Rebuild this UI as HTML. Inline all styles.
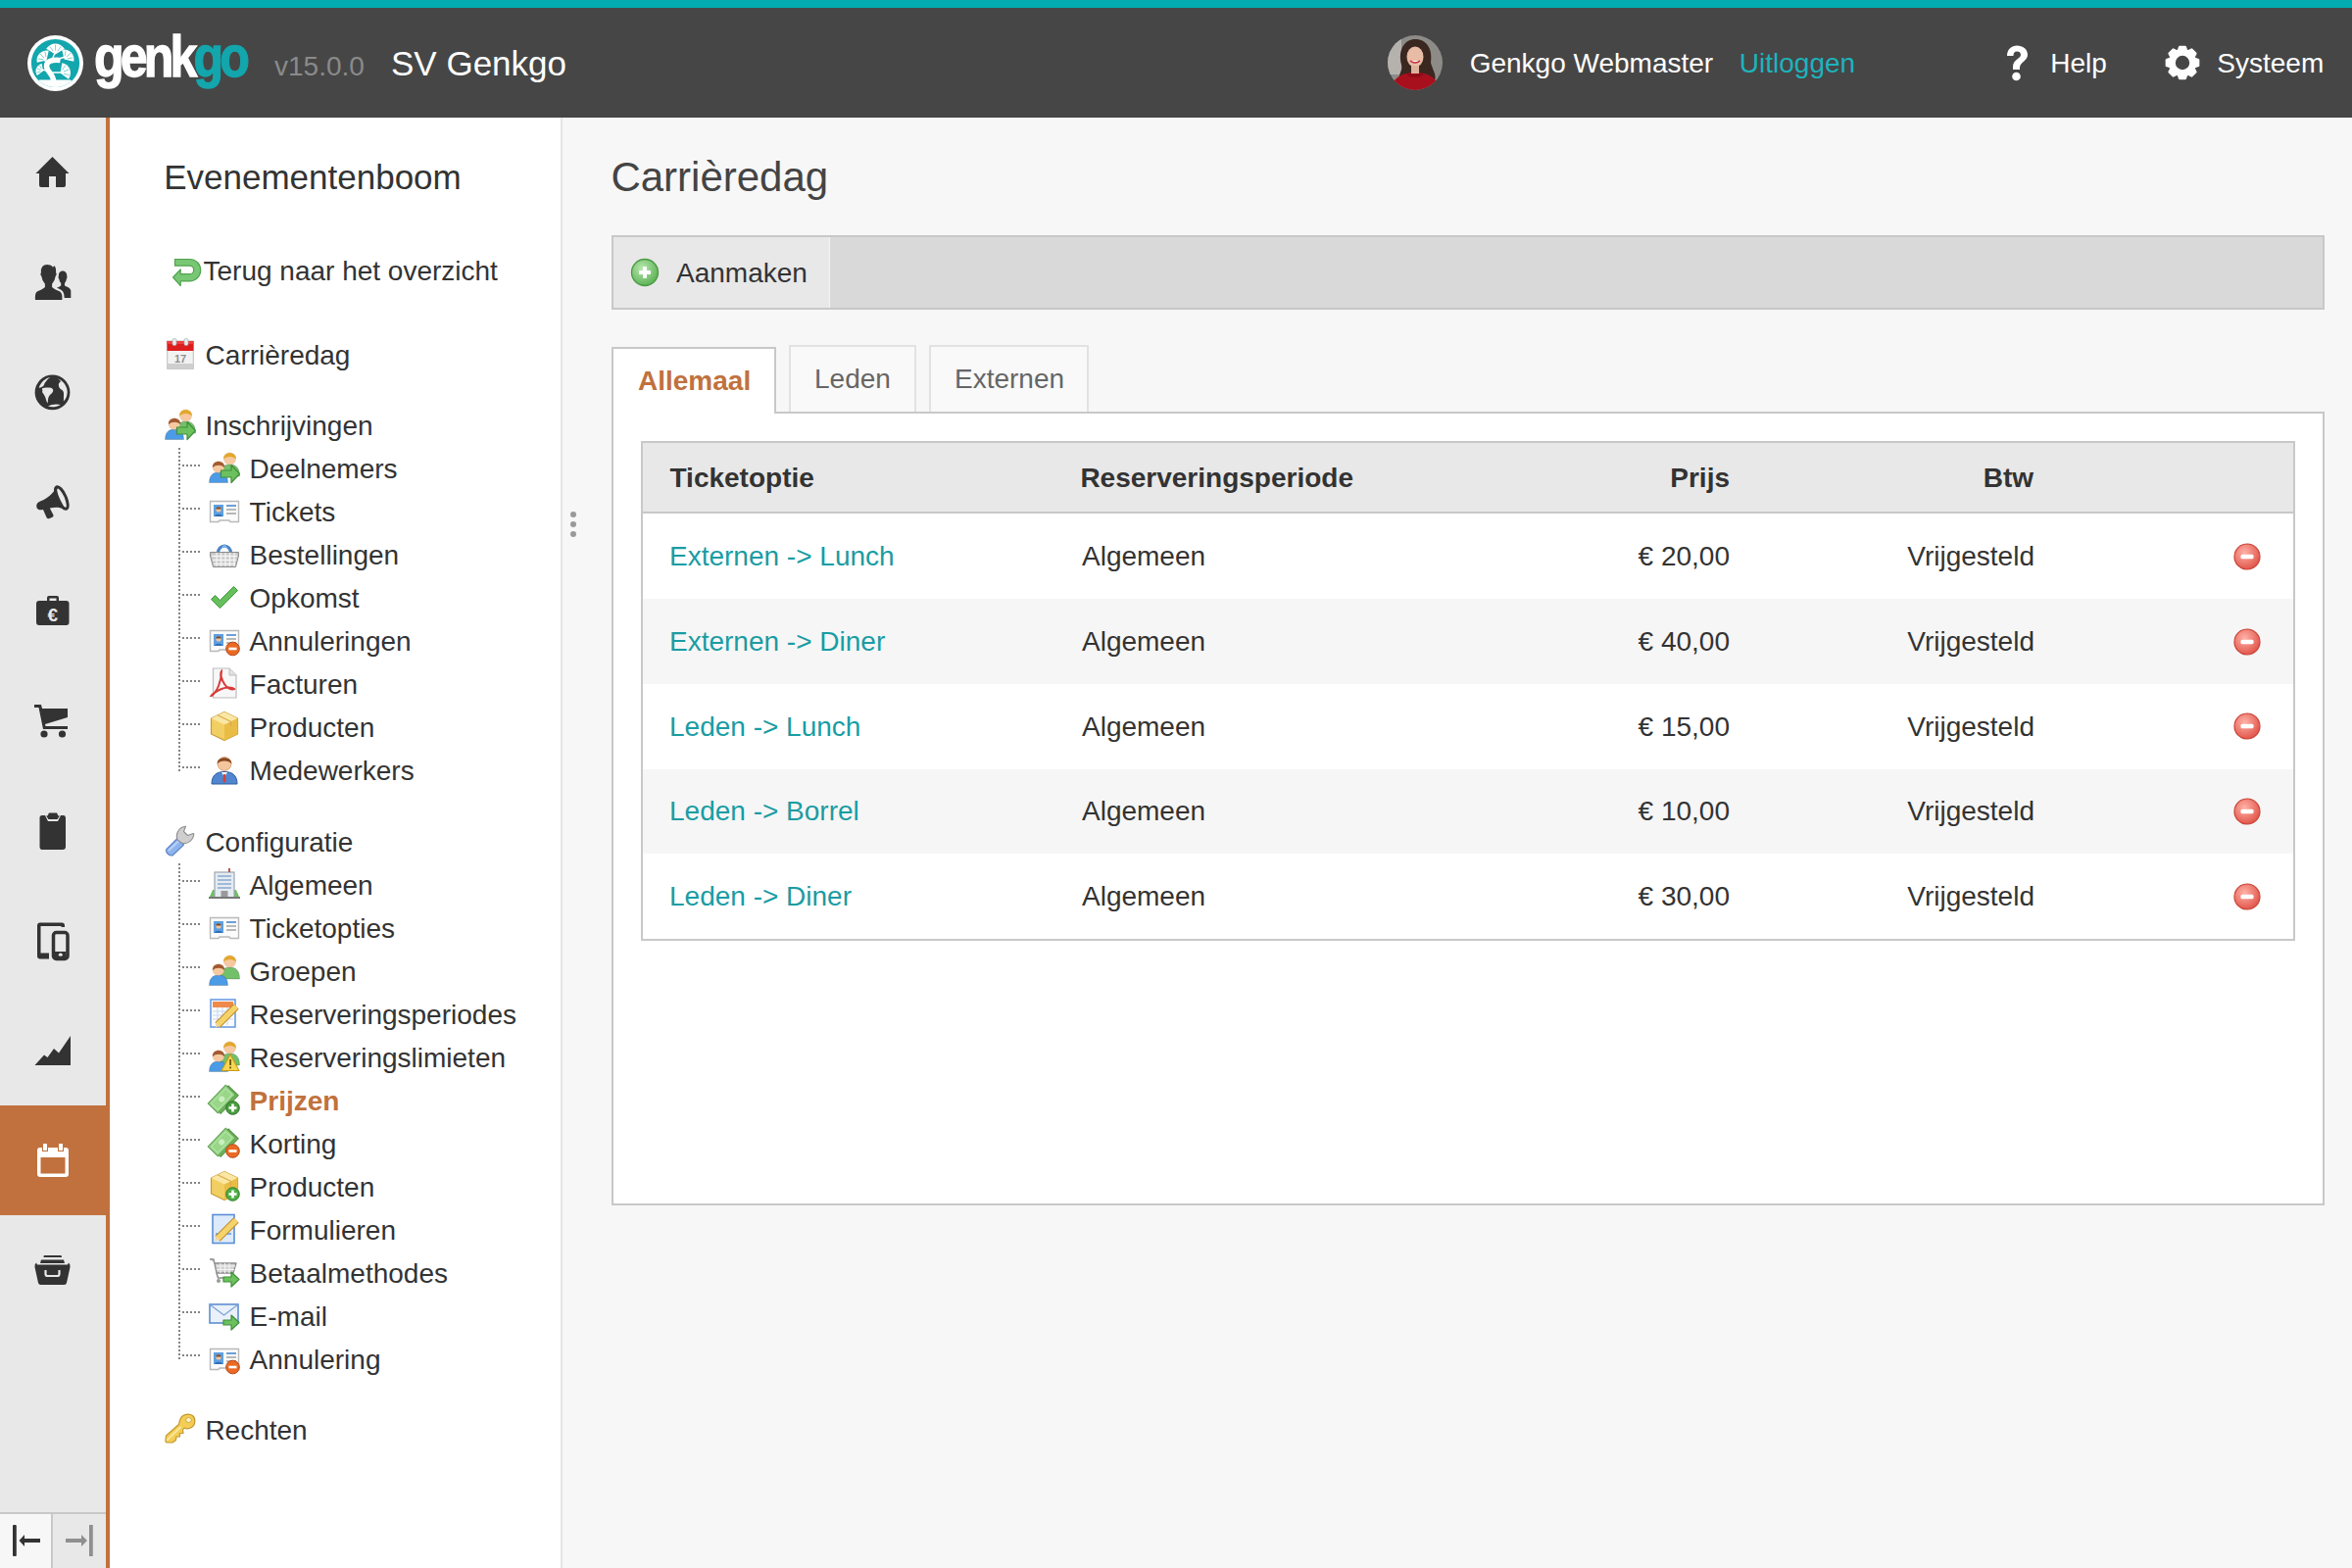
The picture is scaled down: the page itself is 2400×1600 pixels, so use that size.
<!DOCTYPE html>
<html><head><meta charset="utf-8">
<style>
html,body{margin:0;padding:0;}
body{width:2400px;height:1600px;overflow:hidden;position:relative;background:#f7f7f7;font-family:"Liberation Sans",sans-serif;color:#333;}
.a{position:absolute;}
.t{position:absolute;white-space:nowrap;line-height:1;}
.f28{font-size:28px;}
.r{text-align:right;}
svg{position:absolute;overflow:visible;}
</style></head><body>

<!-- top teal bar + header -->
<div class="a" style="left:0;top:0;width:2400px;height:8px;background:#03aab0"></div>
<div class="a" style="left:0;top:8px;width:2400px;height:112px;background:#464646"></div>
<svg style="left:28px;top:35.7px" width="57" height="57" viewBox="0 0 57 57"><defs><clipPath id="lgc"><circle cx="28.5" cy="28.5" r="24.6"/></clipPath></defs><circle cx="28.5" cy="28.5" r="28.5" fill="#fff"/><circle cx="28.5" cy="28.5" r="24.6" fill="#13a6ad"/><g clip-path="url(#lgc)"><path d="M12,45.5 L44,45.5 L46,48 L60,60 L-2,60 L10,48 Z" fill="#fff"/><path d="M26.5,47 C27,40 19.5,37 19.5,31.5 C19.5,26.5 25,24.5 33.5,25.5" stroke="#fff" stroke-width="5.5" fill="none"/><path d="M25,25 L28.5,17 M30,25 L38,22 M20,30 L17,24 M20,36 L14,35 M25,38 L35,38" stroke="#fff" stroke-width="1.4" fill="none"/><g transform="translate(28.5,19.5) rotate(0)"><path d="M0,0 L-9.33,-5.83 A11,11 0 0 1 9.33,-5.83 Z" fill="#fff"/><path d="M-2.20,-3.16 L-5.65,-8.13" stroke="#13a6ad" stroke-width="0.5"/><path d="M0.00,-3.85 L0.00,-9.90" stroke="#13a6ad" stroke-width="0.5"/><path d="M2.20,-3.16 L5.65,-8.13" stroke="#13a6ad" stroke-width="0.5"/></g><g transform="translate(19.5,25.5) rotate(-45)"><path d="M0,0 L-8.48,-5.30 A10,10 0 0 1 8.48,-5.30 Z" fill="#fff"/><path d="M-2.00,-2.87 L-5.14,-7.39" stroke="#13a6ad" stroke-width="0.5"/><path d="M0.00,-3.50 L0.00,-9.00" stroke="#13a6ad" stroke-width="0.5"/><path d="M2.00,-2.87 L5.14,-7.39" stroke="#13a6ad" stroke-width="0.5"/></g><g transform="translate(37.5,24.5) rotate(45)"><path d="M0,0 L-8.48,-5.30 A10,10 0 0 1 8.48,-5.30 Z" fill="#fff"/><path d="M-2.00,-2.87 L-5.14,-7.39" stroke="#13a6ad" stroke-width="0.5"/><path d="M0.00,-3.50 L0.00,-9.00" stroke="#13a6ad" stroke-width="0.5"/><path d="M2.00,-2.87 L5.14,-7.39" stroke="#13a6ad" stroke-width="0.5"/></g><g transform="translate(16,36.5) rotate(-68)"><path d="M0,0 L-6.36,-3.97 A7.5,7.5 0 0 1 6.36,-3.97 Z" fill="#fff"/><path d="M-1.50,-2.16 L-3.85,-5.54" stroke="#13a6ad" stroke-width="0.5"/><path d="M0.00,-2.62 L0.00,-6.75" stroke="#13a6ad" stroke-width="0.5"/><path d="M1.50,-2.16 L3.85,-5.54" stroke="#13a6ad" stroke-width="0.5"/></g><g transform="translate(33.5,38.5) rotate(68)"><path d="M0,0 L-8.90,-5.56 A10.5,10.5 0 0 1 8.90,-5.56 Z" fill="#fff"/><path d="M-2.10,-3.02 L-5.39,-7.76" stroke="#13a6ad" stroke-width="0.5"/><path d="M0.00,-3.67 L0.00,-9.45" stroke="#13a6ad" stroke-width="0.5"/><path d="M2.10,-3.02 L5.39,-7.76" stroke="#13a6ad" stroke-width="0.5"/></g></g></svg>
<svg style="left:1416px;top:36px" width="56" height="56" viewBox="0 0 56 56"><defs><clipPath id="avc"><circle cx="28" cy="28" r="28"/></clipPath></defs><g clip-path="url(#avc)"><rect width="56" height="56" fill="#8d8b88"/><rect x="0" y="0" width="14" height="40" fill="#b5b2ae"/><path d="M14,30 C10,14 18,4 28,4 C40,4 46,14 44,28 C46,36 50,40 48,46 L12,46 C10,40 16,36 14,30Z" fill="#3a2820"/><ellipse cx="28" cy="22" rx="8.5" ry="10.5" fill="#e8bca6"/><path d="M23,26 Q28,30 33,26" stroke="#c03040" stroke-width="1.6" fill="#fff"/><path d="M4,56 C4,44 14,38 28,38 C42,38 52,44 52,56Z" fill="#a8101e"/><rect x="24" y="31" width="8" height="8" fill="#deb19a"/><path d="M20,38 Q28,42 36,38 L36,41 Q28,45 20,41Z" fill="#8e0c18"/></g></svg>
<svg style="left:2045px;top:45.5px" width="25" height="37" viewBox="0 0 25 37"><path d="M3,11 C3,4 8,0.5 13,0.5 C19,0.5 24,4 24,10 C24,16 16,17.5 16,23 L16,25 L9,25 L9,22 C9,14.5 17,14 17,10 C17,7.5 15.5,6.5 13,6.5 C10.5,6.5 9.5,8 9.5,11 Z" fill="#fff"/><circle cx="12.5" cy="32" r="4.3" fill="#fff"/></svg>
<svg style="left:2210px;top:47px" width="34" height="34" viewBox="0 0 34 34"><path d="M29.53,12.86 L33.25,14.11 L33.25,19.89 L29.53,21.14 L28.79,22.94 L30.53,26.44 L26.44,30.53 L22.94,28.79 L21.14,29.53 L19.89,33.25 L14.11,33.25 L12.86,29.53 L11.06,28.79 L7.56,30.53 L3.47,26.44 L5.21,22.94 L4.47,21.14 L0.75,19.89 L0.75,14.11 L4.47,12.86 L5.21,11.06 L3.47,7.56 L7.56,3.47 L11.06,5.21 L12.86,4.47 L14.11,0.75 L19.89,0.75 L21.14,4.47 L22.94,5.21 L26.44,3.47 L30.53,7.56 L28.79,11.06 Z" fill="#fff" stroke="#fff" stroke-width="2.2" stroke-linejoin="round"/><circle cx="17" cy="17" r="7.2" fill="#464646"/></svg>
<div class="t" style="left:96px;top:29px;font-size:59px;font-weight:bold;color:#fff;letter-spacing:-4.6px;transform-origin:0 0;transform:scaleX(0.85);-webkit-text-stroke:1.3px #fff">genk<span style="color:#13a6ad;-webkit-text-stroke:1.3px #13a6ad">go</span></div>
<div class="t f28" style="left:280px;top:53.8px;color:#8a8a8a">v15.0.0</div>
<div class="t" style="left:399px;top:47.4px;font-size:35px;color:#fff">SV Genkgo</div>
<div class="t f28" style="left:1499.7px;top:51px;color:#fff">Genkgo Webmaster</div>
<div class="t f28" style="left:1774.8px;top:51px;color:#1db3bb">Uitloggen</div>
<div class="t f28" style="left:2092.3px;top:51px;color:#fff">Help</div>
<div class="t f28" style="left:2262.3px;top:51px;color:#fff">Systeem</div>

<!-- left nav -->
<div class="a" style="left:0;top:120px;width:108px;height:1480px;background:#e8e8e8"></div>
<div class="a" style="left:108px;top:120px;width:4px;height:1480px;background:#c1713d"></div>
<div class="a" style="left:0;top:1128px;width:112px;height:112px;background:#c1713d"></div>
<div class="a" style="left:0;top:1543px;width:108px;height:2px;background:#c8c8c8"></div>
<div class="a" style="left:0;top:1545px;width:52px;height:55px;background:#f7f7f7"></div>
<div class="a" style="left:52px;top:1545px;width:2px;height:55px;background:#c8c8c8"></div>
<div class="a" style="left:54px;top:1545px;width:54px;height:55px;background:#e8e8e8"></div>
<svg style="left:36px;top:159px" width="36" height="34" viewBox="0 0 36 34"><path d="M17.5,1 L34.5,18 L31,18 L31,30 Q31,32 29,32 L21,32 L21,21 L14,21 L14,32 L6,32 Q4,32 4,30 L4,18 L0.5,18 Z" fill="#333"/></svg>
<svg style="left:34px;top:268px" width="40" height="40" viewBox="0 0 40 40"><path d="M30,8.5 C27,8.5 25.5,11 25.7,14 C25.4,14.5 25.5,16 26.2,16.6 C26.5,18.5 27.2,20 28.2,21 L28.2,23.5 C27,24.5 25.5,25 24,25.8 L24,36 L38.3,36 L38.3,28.5 C38,26.5 36,25.2 33.5,24.2 L32,23.5 L32,21 C33,20 33.6,18.5 33.9,16.6 C34.5,16 34.6,14.5 34.3,14 C34.5,11 33,8.5 30,8.5Z" fill="#333"/><path d="M14,0.8 C9,0.8 6.3,4.5 6.8,10 C6,10.8 6.2,13.2 7.3,14.2 C7.8,17.5 9,20.3 10.8,22 L10.8,24.6 C9.5,26 7,27 4.5,28 C2,29 0.8,31.5 0.8,35 L0.8,39.2 L30.5,39.2 L30.5,35 C30.5,31.5 29,29 26.5,28 C24,27 21.5,26 20.2,24.6 L20.2,22 C22,20.3 23.2,17.5 23.7,14.2 C24.8,13.2 25,10.8 24.2,10 C24.5,6 23.5,3 21.5,1.5 L20,3 C19,1.5 16.5,0.8 14,0.8Z" fill="#333" stroke="#e8e8e8" stroke-width="2.2"/></svg>
<svg style="left:35px;top:381.5px" width="37" height="37" viewBox="0 0 37 37"><circle cx="18.5" cy="18.4" r="17.9" fill="#333"/><path d="M16.1,3.1 C11,4.3 6.8,8 4.7,13.7 C6.5,13.4 8.5,12.6 9.6,11.4 C10.6,8.4 13,5.4 16.1,3.1Z" fill="#e8e8e8"/><path d="M8,14.2 C10,13.4 14,13.3 17,13.8 C18.6,14.3 19.4,15.3 19.2,16.8 C19,18.5 17.5,19.8 16,21 C14.8,22.3 14.2,24 14,26 L13.6,29.6 C12.8,28.5 12.2,26.5 11.6,24.5 C11,22.5 10,21 9,19.6 C8.2,18.5 7.8,17.5 8.4,16.6 C8.2,15.8 7.8,15 8,14.2Z" fill="#e8e8e8"/><path d="M23.8,4.2 C25.5,5 26.5,6 26.9,7.6 C25.9,8.2 25,9 24.8,10.5 C24.8,12.5 25.8,14.5 27.5,15.5 C29.5,16.5 30.1,18 30,20 L29.9,27.6 C32.4,25 33.7,21.5 33.7,18 C33.7,12 29.6,6.5 23.8,4.2Z" fill="#e8e8e8"/><path d="M14,32.6 C17,33.9 23,33.6 26.9,31 C23,30 17,30.5 14,32.6Z" fill="#e8e8e8"/></svg>
<svg style="left:36px;top:494px" width="36" height="38" viewBox="0 0 36 38"><path d="M22,2 C19,9 13,14.5 5,17.5 C1.5,18.8 0.8,21.5 1.5,24 C2.5,26.5 5,26.5 8,26 L11.5,34 Q12.5,35.8 14.5,35 L17.5,33.8 Q19.2,33 18.2,31 L14.8,24.5 C20,23.5 24.5,23.5 30,25.5 Z" fill="#333"/><ellipse cx="26.8" cy="14" rx="4.3" ry="12.2" transform="rotate(-24 26.8 14)" fill="none" stroke="#333" stroke-width="3"/><ellipse cx="26.8" cy="14" rx="2.1" ry="10.2" transform="rotate(-24 26.8 14)" fill="#e8e8e8"/></svg>
<svg style="left:37px;top:607px" width="34" height="32" viewBox="0 0 34 32"><path d="M11,6 L11,3 Q11,1 13,1 L21,1 Q23,1 23,3 L23,6 L20.5,6 L20.5,3.5 L13.5,3.5 L13.5,6 Z" fill="#333"/><rect x="0" y="6" width="33.5" height="25" rx="3" fill="#333"/><text x="16.8" y="26.5" font-family="Liberation Sans" font-weight="bold" font-size="19" fill="#e8e8e8" text-anchor="middle">€</text></svg>
<svg style="left:34px;top:718px" width="36" height="37" viewBox="0 0 36 37"><path d="M1,1 L8,1 L9,5 L35,5 L35,14 L12,21 L12.5,23 L35,23 L35,26 L10,26 L5.5,4 L1,4 Z" fill="#333"/><circle cx="11" cy="31" r="3.6" fill="#333"/><circle cx="29.5" cy="31" r="3.6" fill="#333"/></svg>
<svg style="left:40px;top:828px" width="28" height="40" viewBox="0 0 28 40"><path d="M3,4 L6,4 L9,10 L19,10 L22,4 L25,4 Q27,4 27,6.5 L27,36 Q27,39 24,39 L3,39 Q0.5,39 0.5,36 L0.5,6.5 Q0.5,4 3,4Z" fill="#333"/><path d="M10,1.5 L18,1.5 L19.5,4.5 L21,4.5 L18.5,8 L9.5,8 L7,4.5 L8.5,4.5Z" fill="#333"/></svg>
<svg style="left:37px;top:940px" width="34" height="40" viewBox="0 0 34 40"><path d="M4,1.5 L26,1.5 Q29,1.5 29,4.5 L29,6 L25.5,6 L25.5,5 L4.5,5 L4.5,32.5 L13,32.5 L13,38.5 L4,38.5 Q1,38.5 1,35.5 L1,4.5 Q1,1.5 4,1.5Z" fill="#333"/><rect x="17.5" y="11.5" width="14.5" height="27" rx="3" fill="none" stroke="#333" stroke-width="3.5"/><rect x="19" y="31" width="11.5" height="6" fill="#333"/><ellipse cx="24.8" cy="34.2" rx="2" ry="1.6" fill="#e8e8e8"/></svg>
<svg style="left:35px;top:1056px" width="38" height="32" viewBox="0 0 38 32"><path d="M0.5,31 L10,20.5 L13.5,23 L20,14 L25,18.5 L37,1 L37,31 Z" fill="#333"/></svg>
<svg style="left:37px;top:1166px" width="34" height="36" viewBox="0 0 34 36"><path d="M3.5,5 L30,5 Q33,5 33,8 L33,32 Q33,35 30,35 L4,35 Q1,35 1,32 L1,8 Q1,5 3.5,5 Z M4.5,15 L4.5,31.5 L29.5,31.5 L29.5,15 Z" fill="#fff" fill-rule="evenodd"/><rect x="6.5" y="0.5" width="5" height="8" fill="#fff" stroke="#c1713d" stroke-width="1"/><rect x="22.5" y="0.5" width="5" height="8" fill="#fff" stroke="#c1713d" stroke-width="1"/></svg>
<svg style="left:35px;top:1280px" width="38" height="32" viewBox="0 0 38 32"><path d="M10,1 L27,1 Q28,1 28,2.5 L28,3 L9.5,3 L9.5,2.5 Q9.5,1 10,1Z" fill="#333"/><path d="M7,5.5 L30,5.5 L31,9 L6,9 Z" fill="#333"/><path d="M2,8.5 L3,10.5 L34,10.5 L35,8.5 Q37,10 36.5,13 L33,29 Q32.5,31 30.5,31 L6.5,31 Q4.5,31 4,29 L0.5,13 Q0,10 2,8.5Z" fill="#333"/><path d="M11.5,16 L11.5,20 Q11.5,22 13.5,22 L23.5,22 Q25.5,22 25.5,20 L25.5,16" fill="none" stroke="#e8e8e8" stroke-width="2.2"/></svg>
<svg style="left:0px;top:1550px" width="108" height="44" viewBox="0 0 108 44"><rect x="13" y="6" width="3.8" height="32" rx="1" fill="#333"/><path d="M19.5,22 L25,16 L25,20 L41,20 L41,24 L25,24 L25,28 Z" fill="#333"/><rect x="91" y="6" width="3.8" height="32" fill="#8f8f8f"/><path d="M89,22 L83,16 L83,20 L67,20 L67,24 L83,24 L83,28 Z" fill="#8f8f8f"/></svg>

<!-- tree panel -->
<div class="a" style="left:112px;top:120px;width:460px;height:1480px;background:#fff"></div>
<div class="a" style="left:572px;top:120px;width:2px;height:1480px;background:#e6e6e6"></div>
<div class="a" style="left:582px;top:522px;width:6px;height:6px;border-radius:3px;background:#999"></div>
<div class="a" style="left:582px;top:532px;width:6px;height:6px;border-radius:3px;background:#999"></div>
<div class="a" style="left:582px;top:542px;width:6px;height:6px;border-radius:3px;background:#999"></div>

<div class="t" style="left:167.2px;top:163.4px;font-size:35px;color:#333">Evenementenboom</div>
<div class="t f28" style="left:207.5px;top:263.3px">Terug naar het overzicht</div>
<div class="t f28" style="left:209.6px;top:349.3px">Carrièredag</div>
<div class="t f28" style="left:209.4px;top:421.3px">Inschrijvingen</div>
<div class="t f28" style="left:254.6px;top:465.3px">Deelnemers</div>
<div class="t f28" style="left:254.6px;top:509.3px">Tickets</div>
<div class="t f28" style="left:254.6px;top:553.3px">Bestellingen</div>
<div class="t f28" style="left:254.6px;top:597.3px">Opkomst</div>
<div class="t f28" style="left:254.6px;top:641.3px">Annuleringen</div>
<div class="t f28" style="left:254.6px;top:685.3px">Facturen</div>
<div class="t f28" style="left:254.6px;top:729.3px">Producten</div>
<div class="t f28" style="left:254.6px;top:773.3px">Medewerkers</div>
<div class="t f28" style="left:209.4px;top:845.8px">Configuratie</div>
<div class="t f28" style="left:254.6px;top:889.8px">Algemeen</div>
<div class="t f28" style="left:254.6px;top:933.8px">Ticketopties</div>
<div class="t f28" style="left:254.6px;top:977.8px">Groepen</div>
<div class="t f28" style="left:254.6px;top:1021.8px">Reserveringsperiodes</div>
<div class="t f28" style="left:254.6px;top:1065.8px">Reserveringslimieten</div>
<div class="t f28" style="left:254.6px;top:1109.8px;color:#c1713d;font-weight:bold">Prijzen</div>
<div class="t f28" style="left:254.6px;top:1153.8px">Korting</div>
<div class="t f28" style="left:254.6px;top:1197.8px">Producten</div>
<div class="t f28" style="left:254.6px;top:1241.8px">Formulieren</div>
<div class="t f28" style="left:254.6px;top:1285.8px">Betaalmethodes</div>
<div class="t f28" style="left:254.6px;top:1329.8px">E-mail</div>
<div class="t f28" style="left:254.6px;top:1373.8px">Annulering</div>
<div class="t f28" style="left:209.4px;top:1445.8px">Rechten</div>
<svg style="left:0;top:0" width="600" height="1600"><path d="M182,457h2v2h-2zM182,461h2v2h-2zM182,465h2v2h-2zM182,469h2v2h-2zM182,473h2v2h-2zM182,477h2v2h-2zM182,481h2v2h-2zM182,485h2v2h-2zM182,489h2v2h-2zM182,493h2v2h-2zM182,497h2v2h-2zM182,501h2v2h-2zM182,505h2v2h-2zM182,509h2v2h-2zM182,513h2v2h-2zM182,517h2v2h-2zM182,521h2v2h-2zM182,525h2v2h-2zM182,529h2v2h-2zM182,533h2v2h-2zM182,537h2v2h-2zM182,541h2v2h-2zM182,545h2v2h-2zM182,549h2v2h-2zM182,553h2v2h-2zM182,557h2v2h-2zM182,561h2v2h-2zM182,565h2v2h-2zM182,569h2v2h-2zM182,573h2v2h-2zM182,577h2v2h-2zM182,581h2v2h-2zM182,585h2v2h-2zM182,589h2v2h-2zM182,593h2v2h-2zM182,597h2v2h-2zM182,601h2v2h-2zM182,605h2v2h-2zM182,609h2v2h-2zM182,613h2v2h-2zM182,617h2v2h-2zM182,621h2v2h-2zM182,625h2v2h-2zM182,629h2v2h-2zM182,633h2v2h-2zM182,637h2v2h-2zM182,641h2v2h-2zM182,645h2v2h-2zM182,649h2v2h-2zM182,653h2v2h-2zM182,657h2v2h-2zM182,661h2v2h-2zM182,665h2v2h-2zM182,669h2v2h-2zM182,673h2v2h-2zM182,677h2v2h-2zM182,681h2v2h-2zM182,685h2v2h-2zM182,689h2v2h-2zM182,693h2v2h-2zM182,697h2v2h-2zM182,701h2v2h-2zM182,705h2v2h-2zM182,709h2v2h-2zM182,713h2v2h-2zM182,717h2v2h-2zM182,721h2v2h-2zM182,725h2v2h-2zM182,729h2v2h-2zM182,733h2v2h-2zM182,737h2v2h-2zM182,741h2v2h-2zM182,745h2v2h-2zM182,749h2v2h-2zM182,753h2v2h-2zM182,757h2v2h-2zM182,761h2v2h-2zM182,765h2v2h-2zM182,769h2v2h-2zM182,773h2v2h-2zM182,777h2v2h-2zM182,781h2v2h-2zM182,785h2v2h-2zM186,474h2v2h-2zM190,474h2v2h-2zM194,474h2v2h-2zM198,474h2v2h-2zM202,474h2v2h-2zM186,518h2v2h-2zM190,518h2v2h-2zM194,518h2v2h-2zM198,518h2v2h-2zM202,518h2v2h-2zM186,562h2v2h-2zM190,562h2v2h-2zM194,562h2v2h-2zM198,562h2v2h-2zM202,562h2v2h-2zM186,606h2v2h-2zM190,606h2v2h-2zM194,606h2v2h-2zM198,606h2v2h-2zM202,606h2v2h-2zM186,650h2v2h-2zM190,650h2v2h-2zM194,650h2v2h-2zM198,650h2v2h-2zM202,650h2v2h-2zM186,694h2v2h-2zM190,694h2v2h-2zM194,694h2v2h-2zM198,694h2v2h-2zM202,694h2v2h-2zM186,738h2v2h-2zM190,738h2v2h-2zM194,738h2v2h-2zM198,738h2v2h-2zM202,738h2v2h-2zM186,782h2v2h-2zM190,782h2v2h-2zM194,782h2v2h-2zM198,782h2v2h-2zM202,782h2v2h-2zM182,881h2v2h-2zM182,885h2v2h-2zM182,889h2v2h-2zM182,893h2v2h-2zM182,897h2v2h-2zM182,901h2v2h-2zM182,905h2v2h-2zM182,909h2v2h-2zM182,913h2v2h-2zM182,917h2v2h-2zM182,921h2v2h-2zM182,925h2v2h-2zM182,929h2v2h-2zM182,933h2v2h-2zM182,937h2v2h-2zM182,941h2v2h-2zM182,945h2v2h-2zM182,949h2v2h-2zM182,953h2v2h-2zM182,957h2v2h-2zM182,961h2v2h-2zM182,965h2v2h-2zM182,969h2v2h-2zM182,973h2v2h-2zM182,977h2v2h-2zM182,981h2v2h-2zM182,985h2v2h-2zM182,989h2v2h-2zM182,993h2v2h-2zM182,997h2v2h-2zM182,1001h2v2h-2zM182,1005h2v2h-2zM182,1009h2v2h-2zM182,1013h2v2h-2zM182,1017h2v2h-2zM182,1021h2v2h-2zM182,1025h2v2h-2zM182,1029h2v2h-2zM182,1033h2v2h-2zM182,1037h2v2h-2zM182,1041h2v2h-2zM182,1045h2v2h-2zM182,1049h2v2h-2zM182,1053h2v2h-2zM182,1057h2v2h-2zM182,1061h2v2h-2zM182,1065h2v2h-2zM182,1069h2v2h-2zM182,1073h2v2h-2zM182,1077h2v2h-2zM182,1081h2v2h-2zM182,1085h2v2h-2zM182,1089h2v2h-2zM182,1093h2v2h-2zM182,1097h2v2h-2zM182,1101h2v2h-2zM182,1105h2v2h-2zM182,1109h2v2h-2zM182,1113h2v2h-2zM182,1117h2v2h-2zM182,1121h2v2h-2zM182,1125h2v2h-2zM182,1129h2v2h-2zM182,1133h2v2h-2zM182,1137h2v2h-2zM182,1141h2v2h-2zM182,1145h2v2h-2zM182,1149h2v2h-2zM182,1153h2v2h-2zM182,1157h2v2h-2zM182,1161h2v2h-2zM182,1165h2v2h-2zM182,1169h2v2h-2zM182,1173h2v2h-2zM182,1177h2v2h-2zM182,1181h2v2h-2zM182,1185h2v2h-2zM182,1189h2v2h-2zM182,1193h2v2h-2zM182,1197h2v2h-2zM182,1201h2v2h-2zM182,1205h2v2h-2zM182,1209h2v2h-2zM182,1213h2v2h-2zM182,1217h2v2h-2zM182,1221h2v2h-2zM182,1225h2v2h-2zM182,1229h2v2h-2zM182,1233h2v2h-2zM182,1237h2v2h-2zM182,1241h2v2h-2zM182,1245h2v2h-2zM182,1249h2v2h-2zM182,1253h2v2h-2zM182,1257h2v2h-2zM182,1261h2v2h-2zM182,1265h2v2h-2zM182,1269h2v2h-2zM182,1273h2v2h-2zM182,1277h2v2h-2zM182,1281h2v2h-2zM182,1285h2v2h-2zM182,1289h2v2h-2zM182,1293h2v2h-2zM182,1297h2v2h-2zM182,1301h2v2h-2zM182,1305h2v2h-2zM182,1309h2v2h-2zM182,1313h2v2h-2zM182,1317h2v2h-2zM182,1321h2v2h-2zM182,1325h2v2h-2zM182,1329h2v2h-2zM182,1333h2v2h-2zM182,1337h2v2h-2zM182,1341h2v2h-2zM182,1345h2v2h-2zM182,1349h2v2h-2zM182,1353h2v2h-2zM182,1357h2v2h-2zM182,1361h2v2h-2zM182,1365h2v2h-2zM182,1369h2v2h-2zM182,1373h2v2h-2zM182,1377h2v2h-2zM182,1381h2v2h-2zM182,1385h2v2h-2zM186,898h2v2h-2zM190,898h2v2h-2zM194,898h2v2h-2zM198,898h2v2h-2zM202,898h2v2h-2zM186,942h2v2h-2zM190,942h2v2h-2zM194,942h2v2h-2zM198,942h2v2h-2zM202,942h2v2h-2zM186,986h2v2h-2zM190,986h2v2h-2zM194,986h2v2h-2zM198,986h2v2h-2zM202,986h2v2h-2zM186,1030h2v2h-2zM190,1030h2v2h-2zM194,1030h2v2h-2zM198,1030h2v2h-2zM202,1030h2v2h-2zM186,1074h2v2h-2zM190,1074h2v2h-2zM194,1074h2v2h-2zM198,1074h2v2h-2zM202,1074h2v2h-2zM186,1118h2v2h-2zM190,1118h2v2h-2zM194,1118h2v2h-2zM198,1118h2v2h-2zM202,1118h2v2h-2zM186,1162h2v2h-2zM190,1162h2v2h-2zM194,1162h2v2h-2zM198,1162h2v2h-2zM202,1162h2v2h-2zM186,1206h2v2h-2zM190,1206h2v2h-2zM194,1206h2v2h-2zM198,1206h2v2h-2zM202,1206h2v2h-2zM186,1250h2v2h-2zM190,1250h2v2h-2zM194,1250h2v2h-2zM198,1250h2v2h-2zM202,1250h2v2h-2zM186,1294h2v2h-2zM190,1294h2v2h-2zM194,1294h2v2h-2zM198,1294h2v2h-2zM202,1294h2v2h-2zM186,1338h2v2h-2zM190,1338h2v2h-2zM194,1338h2v2h-2zM198,1338h2v2h-2zM202,1338h2v2h-2zM186,1382h2v2h-2zM190,1382h2v2h-2zM194,1382h2v2h-2zM198,1382h2v2h-2zM202,1382h2v2h-2z" fill="#858585"/></svg>
<svg style="left:176px;top:263px" width="30" height="30" viewBox="0 0 30 30"><path d="M2.5,1.5 L17.5,1.5 A11.2,11.2 0 0 1 17.5,23.9 L8.2,23.9 L8.2,28.6 L0.6,20 L8.2,11.8 L8.2,16.6 L17.5,16.6 A4.2,4.2 0 0 0 17.5,8.2 L2.5,8.2 Z" fill="#78c774" stroke="#52a24e" stroke-width="1.2" stroke-linejoin="round"/></svg>
<svg style="left:170px;top:345px" width="28" height="32" viewBox="0 0 28 32"><rect x="0.7" y="3" width="26.6" height="28.3" fill="#f2f2f2" stroke="#bdbdbd" stroke-width="1"/><rect x="0.7" y="26" width="26.6" height="5.3" fill="#cfcfcf"/><rect x="0.5" y="3" width="27" height="10" fill="#dc1e1e"/><rect x="0.5" y="3" width="27" height="3" fill="#ee4040"/><rect x="6" y="0.5" width="4" height="7" rx="1.5" fill="#e9e9e9" stroke="#9aa" stroke-width="0.6"/><rect x="18" y="0.5" width="4" height="7" rx="1.5" fill="#e9e9e9" stroke="#9aa" stroke-width="0.6"/><text x="14" y="24.5" font-family="Liberation Sans" font-weight="bold" font-size="11" fill="#8f8f8f" text-anchor="middle">17</text></svg>
<svg style="left:168px;top:417px" width="32" height="32" viewBox="0 0 32 32"><path d="M11.5,25 C11.5,16 15.5,13 21.5,13 C27.5,13 31.5,16 31.5,25 Z" fill="#72c06a" stroke="rgba(0,0,0,.22)" stroke-width="0.8"/><circle cx="21.5" cy="7" r="6.2" fill="#f6c9a0" stroke="rgba(0,0,0,.12)" stroke-width="0.6"/><path d="M15.175999999999998,7.62 C14.68,-0.75 28.32,-0.75 27.824,7.62 C24.6,4.21 18.4,4.21 15.175999999999998,7.62Z" fill="#e3a72c"/><path d="M0.5,31.5 C0.5,24 4.3,21 10,21 C15.7,21 19.5,24 19.5,31.5 Z" fill="#4b9be6" stroke="rgba(0,0,0,.22)" stroke-width="0.8"/><circle cx="10" cy="15.5" r="6" fill="#f6c9a0" stroke="rgba(0,0,0,.12)" stroke-width="0.6"/><path d="M3.88,16.1 C3.3999999999999995,8.0 16.6,8.0 16.12,16.1 C13.0,12.8 7.0,12.8 3.88,16.1Z" fill="#a15a32"/><path transform="translate(12,13)" d="M0.5,6 L11,6 L11,0.5 L19.5,9.5 L11,18.5 L11,13 L0.5,13 Z" fill="#6cc15e" stroke="#3f8f3a" stroke-width="1.2" stroke-linejoin="round"/></svg>
<svg style="left:213px;top:461px" width="32" height="32" viewBox="0 0 32 32"><path d="M11.5,25 C11.5,16 15.5,13 21.5,13 C27.5,13 31.5,16 31.5,25 Z" fill="#72c06a" stroke="rgba(0,0,0,.22)" stroke-width="0.8"/><circle cx="21.5" cy="7" r="6.2" fill="#f6c9a0" stroke="rgba(0,0,0,.12)" stroke-width="0.6"/><path d="M15.175999999999998,7.62 C14.68,-0.75 28.32,-0.75 27.824,7.62 C24.6,4.21 18.4,4.21 15.175999999999998,7.62Z" fill="#e3a72c"/><path d="M0.5,31.5 C0.5,24 4.3,21 10,21 C15.7,21 19.5,24 19.5,31.5 Z" fill="#4b9be6" stroke="rgba(0,0,0,.22)" stroke-width="0.8"/><circle cx="10" cy="15.5" r="6" fill="#f6c9a0" stroke="rgba(0,0,0,.12)" stroke-width="0.6"/><path d="M3.88,16.1 C3.3999999999999995,8.0 16.6,8.0 16.12,16.1 C13.0,12.8 7.0,12.8 3.88,16.1Z" fill="#a15a32"/><path transform="translate(12,13)" d="M0.5,6 L11,6 L11,0.5 L19.5,9.5 L11,18.5 L11,13 L0.5,13 Z" fill="#6cc15e" stroke="#3f8f3a" stroke-width="1.2" stroke-linejoin="round"/></svg>
<svg style="left:213px;top:505px" width="32" height="32" viewBox="0 0 32 32"><path d="M1.5,6.5 L30.5,6.5 L30.5,27.5 L22,27.5 L21,26 L11,26 L10,27.5 L1.5,27.5 Z" fill="#fbfbfb" stroke="#b9b9b9" stroke-width="1.4"/><rect x="5" y="10" width="10" height="12" fill="#5d9fe0"/><circle cx="10" cy="15" r="2.6" fill="#f2c39a"/><path d="M7.3,14.5 C7.3,11.5 12.7,11.5 12.7,14.5 Z" fill="#7b4a2a"/><path d="M6,22 C6,19 14,19 14,22 Z" fill="#2f6fb8"/><rect x="18" y="10" width="10" height="2" fill="#6e9fd6"/><rect x="18" y="14" width="10" height="2" fill="#b8b8b8"/><rect x="18" y="18" width="10" height="2" fill="#b8b8b8"/></svg>
<svg style="left:213px;top:549px" width="32" height="32" viewBox="0 0 32 32"><path d="M9.5,15 A6.5,7 0 0 1 22.5,15" fill="none" stroke="#4f86c6" stroke-width="3.2"/><path d="M13,10 L19,10 L16,6 Z" fill="#7fb0e6"/><path d="M1.5,14.5 L30.5,14.5 L30.5,18 L27.5,29.5 L4.5,29.5 L1.5,18 Z" fill="#c9c9c9" stroke="#8a8a8a" stroke-width="1"/><path d="M3,18.5 H29 M4,22.5 H28 M5,26.5 H27 M8,15 V29 M12.5,15 V29 M17,15 V29 M21.5,15 V29 M26,15 V29" stroke="#f5f5f5" stroke-width="1.3"/></svg>
<svg style="left:213px;top:593px" width="32" height="32" viewBox="0 0 32 32"><path d="M2.5,18.5 L6.5,14.5 L11.5,19.5 L25.5,5.5 L29.5,9.5 L11.5,27.5 Z" fill="#66bf5c" stroke="#3e9a3a" stroke-width="1" stroke-linejoin="round"/></svg>
<svg style="left:213px;top:637px" width="32" height="32" viewBox="0 0 32 32"><path d="M1.5,6.5 L30.5,6.5 L30.5,27.5 L22,27.5 L21,26 L11,26 L10,27.5 L1.5,27.5 Z" fill="#fbfbfb" stroke="#b9b9b9" stroke-width="1.4"/><rect x="5" y="10" width="10" height="12" fill="#5d9fe0"/><circle cx="10" cy="15" r="2.6" fill="#f2c39a"/><path d="M7.3,14.5 C7.3,11.5 12.7,11.5 12.7,14.5 Z" fill="#7b4a2a"/><path d="M6,22 C6,19 14,19 14,22 Z" fill="#2f6fb8"/><rect x="18" y="10" width="10" height="2" fill="#6e9fd6"/><rect x="18" y="14" width="10" height="2" fill="#b8b8b8"/><rect x="18" y="18" width="10" height="2" fill="#b8b8b8"/><circle cx="24.5" cy="25" r="6.8" fill="#ea6a23" stroke="#b9461a" stroke-width="1"/><rect x="20.5" y="23.7" width="8" height="2.6" fill="#fff"/></svg>
<svg style="left:213px;top:681px" width="32" height="32" viewBox="0 0 32 32"><path d="M4.5,1 L21,1 L28,8 L28,31 L4.5,31 Z" fill="#f7f7f7" stroke="#bdbdbd" stroke-width="1.2"/><path d="M21,1 L21,8 L28,8" fill="#e2e2e2" stroke="#bdbdbd" stroke-width="1"/><path d="M13,4 C11,6 13,12 16,17 C19,22 24,23 26,22 C24,20 18,20 13,22 C8,24 3,28 2.5,29 C4,29 8,24 10,19 C12,14 13,8 13,4 Z" fill="none" stroke="#d83a3a" stroke-width="2"/></svg>
<svg style="left:213px;top:725px" width="32" height="32" viewBox="0 0 32 32"><path d="M16,1.5 L29.5,8 L29.5,24 L16,30.5 L2.5,24 L2.5,8 Z" fill="#f2cf63" stroke="#c89b35" stroke-width="1.2" stroke-linejoin="round"/><path d="M2.5,8 L16,14.5 L29.5,8 L16,1.5 Z" fill="#fbe7a4"/><path d="M16,14.5 L16,30.5 L29.5,24 L29.5,8 Z" fill="#e9bd45"/><path d="M9,4.8 L22.5,11.3 L22.5,16" stroke="#d6a84a" stroke-width="1.2" fill="none"/></svg>
<svg style="left:213px;top:769px" width="32" height="32" viewBox="0 0 32 32"><path d="M3,31 C3,22 8,18.5 16,18.5 C24,18.5 29,22 29,31 Z" fill="#4f86cf" stroke="#2f5f9f" stroke-width="1"/><path d="M13,19 L16,24 L19,19 Z" fill="#fff"/><path d="M15,21 L17,21 L17.5,28 L16,30 L14.5,28 Z" fill="#d0443c"/><circle cx="16" cy="10.5" r="7" fill="#f4c69c" stroke="#c08a60" stroke-width="0.6"/><path d="M8.7,10.5 C8,2 24,2 23.3,10.5 C21,6.5 11,6.5 8.7,10.5Z" fill="#8a4a22"/></svg>
<svg style="left:168px;top:841px" width="32" height="32" viewBox="0 0 32 32"><path d="M1.5,26 L13,14.5 L19.5,21 L8,32 C5,32.5 1,29.5 1.5,26 Z" fill="#8db3ee" stroke="#5d85c8" stroke-width="1.1" stroke-linejoin="round"/><path d="M4,27 L14.5,17" stroke="#b8d0f6" stroke-width="2"/><path d="M13,16 C11,11 13.5,4 20,2.5 L21.5,2.2 L19.5,7.5 L23.5,11.5 L29,9.5 L29.8,9.8 C29.5,16 24,20.5 18,19.5 Z" fill="#cfcfcf" stroke="#8f8f8f" stroke-width="1.1" stroke-linejoin="round"/></svg>
<svg style="left:213px;top:885.5px" width="32" height="32" viewBox="0 0 32 32"><path d="M0.5,30 L4,22 L9,22 L9,30 Z M31.5,30 L28,22 L23,22 L23,30 Z" fill="#6cc160"/><rect x="6" y="4" width="20" height="26" fill="#e4ebf2" stroke="#9da6ae" stroke-width="1.2"/><rect x="9" y="7" width="14" height="2" fill="#9fb9d6"/><rect x="9" y="11" width="14" height="2" fill="#9fb9d6"/><rect x="9" y="15" width="14" height="2" fill="#9fb9d6"/><rect x="9" y="19" width="14" height="2" fill="#9fb9d6"/><rect x="12.5" y="23" width="7" height="7" fill="#9a9a9a"/><rect x="20" y="0" width="2" height="4" fill="#b55"/><rect x="0" y="29" width="32" height="2" fill="#777"/></svg>
<svg style="left:213px;top:929.5px" width="32" height="32" viewBox="0 0 32 32"><path d="M1.5,6.5 L30.5,6.5 L30.5,27.5 L22,27.5 L21,26 L11,26 L10,27.5 L1.5,27.5 Z" fill="#fbfbfb" stroke="#b9b9b9" stroke-width="1.4"/><rect x="5" y="10" width="10" height="12" fill="#5d9fe0"/><circle cx="10" cy="15" r="2.6" fill="#f2c39a"/><path d="M7.3,14.5 C7.3,11.5 12.7,11.5 12.7,14.5 Z" fill="#7b4a2a"/><path d="M6,22 C6,19 14,19 14,22 Z" fill="#2f6fb8"/><rect x="18" y="10" width="10" height="2" fill="#6e9fd6"/><rect x="18" y="14" width="10" height="2" fill="#b8b8b8"/><rect x="18" y="18" width="10" height="2" fill="#b8b8b8"/></svg>
<svg style="left:213px;top:973.5px" width="32" height="32" viewBox="0 0 32 32"><path d="M11.5,25 C11.5,16 15.5,13 21.5,13 C27.5,13 31.5,16 31.5,25 Z" fill="#72c06a" stroke="rgba(0,0,0,.22)" stroke-width="0.8"/><circle cx="21.5" cy="7" r="6.2" fill="#f6c9a0" stroke="rgba(0,0,0,.12)" stroke-width="0.6"/><path d="M15.175999999999998,7.62 C14.68,-0.75 28.32,-0.75 27.824,7.62 C24.6,4.21 18.4,4.21 15.175999999999998,7.62Z" fill="#e3a72c"/><path d="M0.5,31.5 C0.5,24 4.3,21 10,21 C15.7,21 19.5,24 19.5,31.5 Z" fill="#4b9be6" stroke="rgba(0,0,0,.22)" stroke-width="0.8"/><circle cx="10" cy="15.5" r="6" fill="#f6c9a0" stroke="rgba(0,0,0,.12)" stroke-width="0.6"/><path d="M3.88,16.1 C3.3999999999999995,8.0 16.6,8.0 16.12,16.1 C13.0,12.8 7.0,12.8 3.88,16.1Z" fill="#a15a32"/></svg>
<svg style="left:213px;top:1017.5px" width="32" height="32" viewBox="0 0 32 32"><rect x="2" y="2" width="25" height="28" fill="#fafcff" stroke="#6d9de0" stroke-width="1.6"/><rect x="4" y="4" width="21" height="6" fill="#f08a4b"/><path d="M4,14 H25 M4,18 H25 M4,22 H25 M9,10 V28 M14,10 V28 M19,10 V28" stroke="#c7d7ee" stroke-width="1"/><line x1="9" y1="28" x2="28" y2="9" stroke="#c58a2a" stroke-width="7.5" stroke-linecap="butt"/><line x1="9" y1="28" x2="28" y2="9" stroke="#f4d46a" stroke-width="5.5" stroke-linecap="butt"/><path d="M6.5,30.5 L8,25 L11.5,28.5 Z" fill="#f0d5a0"/></svg>
<svg style="left:213px;top:1061.5px" width="32" height="32" viewBox="0 0 32 32"><path d="M11.5,25 C11.5,16 15.5,13 21.5,13 C27.5,13 31.5,16 31.5,25 Z" fill="#72c06a" stroke="rgba(0,0,0,.22)" stroke-width="0.8"/><circle cx="21.5" cy="7" r="6.2" fill="#f6c9a0" stroke="rgba(0,0,0,.12)" stroke-width="0.6"/><path d="M15.175999999999998,7.62 C14.68,-0.75 28.32,-0.75 27.824,7.62 C24.6,4.21 18.4,4.21 15.175999999999998,7.62Z" fill="#e3a72c"/><path d="M0.5,31.5 C0.5,24 4.3,21 10,21 C15.7,21 19.5,24 19.5,31.5 Z" fill="#4b9be6" stroke="rgba(0,0,0,.22)" stroke-width="0.8"/><circle cx="10" cy="15.5" r="6" fill="#f6c9a0" stroke="rgba(0,0,0,.12)" stroke-width="0.6"/><path d="M3.88,16.1 C3.3999999999999995,8.0 16.6,8.0 16.12,16.1 C13.0,12.8 7.0,12.8 3.88,16.1Z" fill="#a15a32"/><path d="M22,14 L31,30.5 L13,30.5 Z" fill="#f7d651" stroke="#c79a1d" stroke-width="1.1" stroke-linejoin="round"/><rect x="21.2" y="19" width="1.8" height="6" fill="#6b5210"/><rect x="21.2" y="26.5" width="1.8" height="1.8" fill="#6b5210"/></svg>
<svg style="left:213px;top:1105.5px" width="32" height="32" viewBox="0 0 32 32"><g transform="translate(14,15.5) rotate(-46)"><rect x="-12" y="-5" width="26" height="14" fill="#6fb85f" stroke="#4f8f41" stroke-width="1"/><rect x="-13.5" y="-7.5" width="26" height="14" fill="#98d688" stroke="#5f9f50" stroke-width="1"/><rect x="-11" y="-5" width="21" height="9" fill="none" stroke="#c4ebb8" stroke-width="0.8"/><circle cx="-0.5" cy="-0.5" r="3" fill="#c9efbf"/></g><circle cx="24.5" cy="24.5" r="6.8" fill="#4a9e40" stroke="#2f6f28" stroke-width="1"/><rect x="20.5" y="23.2" width="8" height="2.6" fill="#fff"/><rect x="23.2" y="20.5" width="2.6" height="8" fill="#fff"/></svg>
<svg style="left:213px;top:1149.5px" width="32" height="32" viewBox="0 0 32 32"><g transform="translate(14,15.5) rotate(-46)"><rect x="-12" y="-5" width="26" height="14" fill="#6fb85f" stroke="#4f8f41" stroke-width="1"/><rect x="-13.5" y="-7.5" width="26" height="14" fill="#98d688" stroke="#5f9f50" stroke-width="1"/><rect x="-11" y="-5" width="21" height="9" fill="none" stroke="#c4ebb8" stroke-width="0.8"/><circle cx="-0.5" cy="-0.5" r="3" fill="#c9efbf"/></g><circle cx="24.5" cy="24.5" r="6.8" fill="#ea6a23" stroke="#b9461a" stroke-width="1"/><rect x="20.5" y="23.2" width="8" height="2.6" fill="#fff"/></svg>
<svg style="left:213px;top:1193.5px" width="32" height="32" viewBox="0 0 32 32"><path d="M16,1.5 L29.5,8 L29.5,24 L16,30.5 L2.5,24 L2.5,8 Z" fill="#f2cf63" stroke="#c89b35" stroke-width="1.2" stroke-linejoin="round"/><path d="M2.5,8 L16,14.5 L29.5,8 L16,1.5 Z" fill="#fbe7a4"/><path d="M16,14.5 L16,30.5 L29.5,24 L29.5,8 Z" fill="#e9bd45"/><path d="M9,4.8 L22.5,11.3 L22.5,16" stroke="#d6a84a" stroke-width="1.2" fill="none"/><circle cx="24.5" cy="24.5" r="6.8" fill="#4fae46" stroke="#2f7f2a" stroke-width="1"/><rect x="20.5" y="23.2" width="8" height="2.6" fill="#fff"/><rect x="23.2" y="20.5" width="2.6" height="8" fill="#fff"/></svg>
<svg style="left:213px;top:1237.5px" width="32" height="32" viewBox="0 0 32 32"><rect x="4" y="1.5" width="22" height="29" fill="#dceafb" stroke="#5b8fd8" stroke-width="1.6"/><rect x="7" y="20" width="16" height="2" fill="#7faee8"/><line x1="9" y1="26" x2="28" y2="7" stroke="#c58a2a" stroke-width="7.5" stroke-linecap="butt"/><line x1="9" y1="26" x2="28" y2="7" stroke="#f4d46a" stroke-width="5.5" stroke-linecap="butt"/><path d="M6,28.5 L7.5,23 L11,26.5 Z" fill="#f0d5a0"/></svg>
<svg style="left:213px;top:1281.5px" width="32" height="32" viewBox="0 0 32 32"><path d="M1,3 L5,3 L8,17 L25,17 L28,7 L6,7" fill="#d2d2d2" stroke="#8c8c8c" stroke-width="1.3" stroke-linejoin="round"/><path d="M8,10 H27 M8,13.5 H26 M12,7 V17 M16.5,7 V17 M21,7 V17" stroke="#f4f4f4" stroke-width="1"/><path d="M8,17 L9.5,22 L15,22" fill="none" stroke="#8c8c8c" stroke-width="1.5"/><circle cx="10" cy="25" r="2" fill="#999"/><path transform="translate(15,16) scale(1.0)" d="M0,5 L8,5 L8,0 L16,7.5 L8,15 L8,10 L0,10 Z" fill="#6cc15e" stroke="#3f8f3a" stroke-width="1.2" stroke-linejoin="round"/></svg>
<svg style="left:213px;top:1325.5px" width="32" height="32" viewBox="0 0 32 32"><rect x="1" y="5" width="29" height="19" fill="#eaf1fb" stroke="#5e8fd0" stroke-width="1.6"/><path d="M1.5,5.5 L15.5,16 L29.5,5.5" fill="none" stroke="#7ea4d9" stroke-width="1.3"/><path transform="translate(15,16) scale(1.0)" d="M0,5 L8,5 L8,0 L16,7.5 L8,15 L8,10 L0,10 Z" fill="#6cc15e" stroke="#3f8f3a" stroke-width="1.2" stroke-linejoin="round"/></svg>
<svg style="left:213px;top:1369.5px" width="32" height="32" viewBox="0 0 32 32"><path d="M1.5,6.5 L30.5,6.5 L30.5,27.5 L22,27.5 L21,26 L11,26 L10,27.5 L1.5,27.5 Z" fill="#fbfbfb" stroke="#b9b9b9" stroke-width="1.4"/><rect x="5" y="10" width="10" height="12" fill="#5d9fe0"/><circle cx="10" cy="15" r="2.6" fill="#f2c39a"/><path d="M7.3,14.5 C7.3,11.5 12.7,11.5 12.7,14.5 Z" fill="#7b4a2a"/><path d="M6,22 C6,19 14,19 14,22 Z" fill="#2f6fb8"/><rect x="18" y="10" width="10" height="2" fill="#6e9fd6"/><rect x="18" y="14" width="10" height="2" fill="#b8b8b8"/><rect x="18" y="18" width="10" height="2" fill="#b8b8b8"/><circle cx="24.5" cy="25" r="6.8" fill="#ea6a23" stroke="#b9461a" stroke-width="1"/><rect x="20.5" y="23.7" width="8" height="2.6" fill="#fff"/></svg>
<svg style="left:168px;top:1441px" width="32" height="32" viewBox="0 0 32 32"><path d="M15.5,8.5 C17,2.5 24,0.5 28.5,3.5 C32,6.5 31.5,13 27.5,15.5 C25,17 22,17 20,16 L18.5,18 L19,21.5 L15.5,21.5 L15.5,25 L12,25 L11.5,28.5 L8,31 L2.5,31 C1,31 0.8,29.5 1,28 L1.5,24 L14.5,12.5 C14.8,11 15,10 15.5,8.5 Z" fill="#f3cd55" stroke="#c39a2e" stroke-width="1.2" stroke-linejoin="round"/><path d="M3,28 L16,15.5" stroke="#fbe79a" stroke-width="2" stroke-linecap="round"/><ellipse cx="24.5" cy="8" rx="2.8" ry="2.5" fill="#fff6cf" stroke="#c39a2e" stroke-width="0.8"/></svg>

<!-- content -->
<div class="t" style="left:623.4px;top:160.4px;font-size:42px;color:#444">Carrièredag</div>

<div class="a" style="left:624px;top:240px;width:1744px;height:72px;border:2px solid #c8c8c8;background:#d9d9d9"></div>
<div class="a" style="left:626px;top:242px;width:220px;height:72px;background:#e8e8e8;border-right:1px solid #f2f2f2"></div>
<div class="t f28" style="left:690px;top:265.3px">Aanmaken</div>
<svg style="left:643px;top:263px" width="30" height="30" viewBox="0 0 30 30"><defs><radialGradient id="gpl" cx="40%" cy="35%" r="65%"><stop offset="0" stop-color="#b9e8b0"/><stop offset="1" stop-color="#5fb356"/></radialGradient></defs><circle cx="15" cy="15" r="13.5" fill="url(#gpl)" stroke="#4a9a44" stroke-width="1.3"/><rect x="9" y="13" width="12" height="4" rx="0.8" fill="#fff"/><rect x="13" y="9" width="4" height="12" rx="0.8" fill="#fff"/></svg>

<!-- tabs panel -->
<div class="a" style="left:624px;top:420px;width:1744px;height:806px;border:2px solid #c8c8c8;background:#fff"></div>
<div class="a" style="left:805px;top:352px;width:126px;height:66px;border:2px solid #e2e2e2;border-bottom:0;background:#f9f9f9"></div>
<div class="a" style="left:948px;top:352px;width:159px;height:66px;border:2px solid #e2e2e2;border-bottom:0;background:#f9f9f9"></div>
<div class="a" style="left:624px;top:354px;width:164px;height:66px;border:2px solid #c8c8c8;border-bottom:0;background:#fff"></div>
<div class="t f28" style="left:651px;top:375.3px;color:#c1713d;font-weight:bold">Allemaal</div>
<div class="t f28" style="left:831px;top:373.3px;color:#666">Leden</div>
<div class="t f28" style="left:974px;top:373.3px;color:#666">Externen</div>

<!-- table -->
<div class="a" style="left:654px;top:450px;width:1684px;height:506px;border:2px solid #c8c8c8;background:#fff"></div>
<div class="a" style="left:656px;top:452px;width:1684px;height:70px;background:#e8e8e8;border-bottom:2px solid #c8c8c8"></div>
<div class="a" style="left:656px;top:611px;width:1684px;height:87px;background:#f6f6f6"></div>
<div class="a" style="left:656px;top:785px;width:1684px;height:86px;background:#f6f6f6"></div>

<div class="t f28" style="left:683.5px;top:474.3px;font-weight:bold">Ticketoptie</div>
<div class="t f28" style="left:1102.4px;top:474.3px;font-weight:bold">Reserveringsperiode</div>
<div class="t f28 r" style="left:1465px;width:300px;top:474.3px;font-weight:bold">Prijs</div>
<div class="t f28 r" style="left:1775px;width:300px;top:474.3px;font-weight:bold">Btw</div>
<svg style="left:2279px;top:554.0px" width="28" height="28" viewBox="0 0 28 28"><defs><radialGradient id="rdg0" cx="40%" cy="35%" r="65%"><stop offset="0" stop-color="#ffb2a8"/><stop offset="1" stop-color="#e2574c"/></radialGradient></defs><circle cx="14" cy="14" r="13" fill="url(#rdg0)" stroke="#c94438" stroke-width="1.2"/><rect x="7.5" y="11.8" width="13" height="4.4" rx="1.5" fill="#fff"/></svg>
<svg style="left:2279px;top:640.7px" width="28" height="28" viewBox="0 0 28 28"><defs><radialGradient id="rdg1" cx="40%" cy="35%" r="65%"><stop offset="0" stop-color="#ffb2a8"/><stop offset="1" stop-color="#e2574c"/></radialGradient></defs><circle cx="14" cy="14" r="13" fill="url(#rdg1)" stroke="#c94438" stroke-width="1.2"/><rect x="7.5" y="11.8" width="13" height="4.4" rx="1.5" fill="#fff"/></svg>
<svg style="left:2279px;top:727.4px" width="28" height="28" viewBox="0 0 28 28"><defs><radialGradient id="rdg2" cx="40%" cy="35%" r="65%"><stop offset="0" stop-color="#ffb2a8"/><stop offset="1" stop-color="#e2574c"/></radialGradient></defs><circle cx="14" cy="14" r="13" fill="url(#rdg2)" stroke="#c94438" stroke-width="1.2"/><rect x="7.5" y="11.8" width="13" height="4.4" rx="1.5" fill="#fff"/></svg>
<svg style="left:2279px;top:814.1px" width="28" height="28" viewBox="0 0 28 28"><defs><radialGradient id="rdg3" cx="40%" cy="35%" r="65%"><stop offset="0" stop-color="#ffb2a8"/><stop offset="1" stop-color="#e2574c"/></radialGradient></defs><circle cx="14" cy="14" r="13" fill="url(#rdg3)" stroke="#c94438" stroke-width="1.2"/><rect x="7.5" y="11.8" width="13" height="4.4" rx="1.5" fill="#fff"/></svg>
<svg style="left:2279px;top:900.8px" width="28" height="28" viewBox="0 0 28 28"><defs><radialGradient id="rdg4" cx="40%" cy="35%" r="65%"><stop offset="0" stop-color="#ffb2a8"/><stop offset="1" stop-color="#e2574c"/></radialGradient></defs><circle cx="14" cy="14" r="13" fill="url(#rdg4)" stroke="#c94438" stroke-width="1.2"/><rect x="7.5" y="11.8" width="13" height="4.4" rx="1.5" fill="#fff"/></svg>
<div id="rows">
<div class="t f28" style="left:683px;top:554.3px;color:#1a9ca3">Externen -&gt; Lunch</div>
<div class="t f28" style="left:1104px;top:554.3px">Algemeen</div>
<div class="t f28 r" style="left:1465px;width:300px;top:554.3px">€ 20,00</div>
<div class="t f28 r" style="left:1776px;width:300px;top:554.3px">Vrijgesteld</div>
<div class="t f28" style="left:683px;top:641.0px;color:#1a9ca3">Externen -&gt; Diner</div>
<div class="t f28" style="left:1104px;top:641.0px">Algemeen</div>
<div class="t f28 r" style="left:1465px;width:300px;top:641.0px">€ 40,00</div>
<div class="t f28 r" style="left:1776px;width:300px;top:641.0px">Vrijgesteld</div>
<div class="t f28" style="left:683px;top:727.7px;color:#1a9ca3">Leden -&gt; Lunch</div>
<div class="t f28" style="left:1104px;top:727.7px">Algemeen</div>
<div class="t f28 r" style="left:1465px;width:300px;top:727.7px">€ 15,00</div>
<div class="t f28 r" style="left:1776px;width:300px;top:727.7px">Vrijgesteld</div>
<div class="t f28" style="left:683px;top:814.4px;color:#1a9ca3">Leden -&gt; Borrel</div>
<div class="t f28" style="left:1104px;top:814.4px">Algemeen</div>
<div class="t f28 r" style="left:1465px;width:300px;top:814.4px">€ 10,00</div>
<div class="t f28 r" style="left:1776px;width:300px;top:814.4px">Vrijgesteld</div>
<div class="t f28" style="left:683px;top:901.1px;color:#1a9ca3">Leden -&gt; Diner</div>
<div class="t f28" style="left:1104px;top:901.1px">Algemeen</div>
<div class="t f28 r" style="left:1465px;width:300px;top:901.1px">€ 30,00</div>
<div class="t f28 r" style="left:1776px;width:300px;top:901.1px">Vrijgesteld</div>
</div>

</body></html>
